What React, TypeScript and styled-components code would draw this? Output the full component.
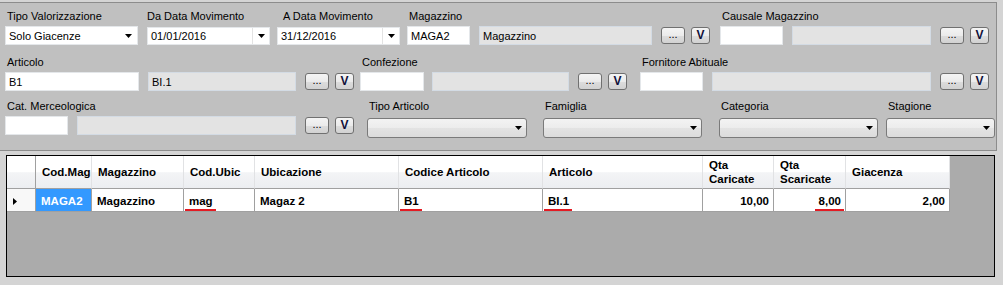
import React from "react";
import styled, { createGlobalStyle } from "styled-components";

const GlobalStyle = createGlobalStyle`
  html, body { margin: 0; padding: 0; background: #d4d4d4; }
  body { font-family: "Liberation Sans", Arial, sans-serif; color: #000; }
  * { box-sizing: border-box; }
`;

const Page = styled.div`
  width: 1003px;
  height: 285px;
  padding-top: 2px;
  background: #d4d4d4;
  overflow: hidden;
`;

const FilterPanel = styled.div`
  width: 997px;
  height: 149px;
  background: #c0c0c0;
  border-top: 1px solid #8c8c8c;
  border-right: 1px solid #8c8c8c;
  border-bottom: 1px solid #8c8c8c;
  padding-top: 6px;
  display: flex;
  flex-direction: column;
`;

const FormRow = styled.div<{ $mt?: number }>`
  display: flex;
  align-items: flex-start;
  margin-top: ${(p) => p.$mt ?? 0}px;
`;

const Field = styled.div<{ $ml: number; $gap?: number }>`
  display: flex;
  flex-direction: column;
  margin-left: ${(p) => p.$ml}px;
  gap: ${(p) => p.$gap ?? 3}px;
`;

const Label = styled.div<{ $pl?: number }>`
  font-size: 11px;
  line-height: 14px;
  height: 14px;
  white-space: nowrap;
  padding-left: ${(p) => p.$pl ?? 2}px;
`;

const Controls = styled.div`
  display: flex;
  align-items: center;
  height: 19px;
`;

const TextBox = styled.div<{ $w: number; $ro?: boolean; $ml?: number }>`
  width: ${(p) => p.$w}px;
  height: 19px;
  margin-left: ${(p) => p.$ml ?? 0}px;
  background: ${(p) => (p.$ro ? "#e3e3e3" : "#ffffff")};
  border: 1px solid ${(p) => (p.$ro ? "#d3dbe4" : "#e4e7ea")};
  font-size: 11px;
  padding-left: 3px;
  display: flex;
  align-items: center;
  white-space: nowrap;
  overflow: hidden;
`;

const SmallButton = styled.div<{ $w: number; $ml: number; $bold?: boolean }>`
  width: ${(p) => p.$w}px;
  height: 17px;
  margin-left: ${(p) => p.$ml}px;
  border: 1px solid #707070;
  border-radius: 3px;
  background: linear-gradient(#f4f4f4 0%, #ebebeb 50%, #dddddd 51%, #d2d2d2 100%);
  display: flex;
  justify-content: center;
  align-items: ${(p) => (p.$bold ? "center" : "flex-end")};
  padding-bottom: ${(p) => (p.$bold ? 0 : 3)}px;
  font-size: ${(p) => (p.$bold ? 12 : 11)}px;
  font-weight: ${(p) => (p.$bold ? "bold" : "normal")};
  line-height: 11px;
  color: ${(p) => (p.$bold ? "#10103a" : "#000")};
`;

const DropBox = styled.div<{ $w: number }>`
  width: ${(p) => p.$w}px;
  height: 19px;
  background: #ffffff;
  border: 1px solid #e4e7ea;
  display: flex;
  align-items: center;
  font-size: 11px;
  padding-left: 3px;
  padding-right: 5px;
`;

const DropText = styled.span`
  flex: 1;
  white-space: nowrap;
`;

const DateBox = styled.div<{ $w: number }>`
  width: ${(p) => p.$w}px;
  height: 18px;
  margin-top: 1px;
  background: #ffffff;
  border: 1px solid #e4e7ea;
  display: flex;
  align-items: stretch;
  font-size: 11px;
`;

const DateText = styled.span`
  flex: 1;
  padding-left: 3px;
  display: flex;
  align-items: center;
`;

const DateButton = styled.span`
  width: 17px;
  border-left: 1px solid #e3e3e3;
  display: flex;
  align-items: center;
  justify-content: center;
`;

const FlatCombo = styled.div<{ $w: number }>`
  width: ${(p) => p.$w}px;
  height: 20px;
  border: 1px solid #7a7a7a;
  border-radius: 3px;
  background: linear-gradient(#f3f3f3 0%, #ececec 50%, #e3e3e3 51%, #dcdcdc 100%);
  display: flex;
  align-items: center;
  justify-content: flex-end;
  padding-right: 4px;
`;

const Arrow = () => (
  <svg width="7" height="4" viewBox="0 0 7 4">
    <polygon points="0,0 7,0 3.5,4" fill="#000" />
  </svg>
);

const GridBox = styled.div`
  margin: 4px 0 0 6px;
  width: 989px;
  height: 122px;
  border: 1px solid #000;
  background: #ababab;
`;

const GridTable = styled.div`
  display: grid;
  grid-template-columns: 29px 56px 92px 71px 144px 144px 160px 71px 72px 104px;
  width: 943px;
`;

const HeaderCell = styled.div<{ $dark?: boolean }>`
  height: 33px;
  border-right: 1px solid ${(p) => (p.$dark ? "#a0a0a0" : "#e1e2e4")};
  border-bottom: 1px solid #a0a0a0;
  background: linear-gradient(#ffffff 0%, #ffffff 50%, #f3f4f6 52%, #eceef1 100%);
  display: flex;
  align-items: center;
  padding-left: 6px;
  font-weight: bold;
  font-size: 11.5px;
  line-height: 14px;
  white-space: nowrap;
  overflow: hidden;
`;

const RowHeaderCell = styled.div`
  height: 23px;
  border-right: 1px solid #a0a0a0;
  border-bottom: 1px solid #a0a0a0;
  background: #f8f8f8;
  display: flex;
  align-items: center;
  padding-left: 6px;
  padding-top: 2px;
`;

const DataCell = styled.div<{ $right?: boolean; $selected?: boolean }>`
  height: 23px;
  border-right: 1px solid #a0a0a0;
  border-bottom: 1px solid #a0a0a0;
  background: ${(p) => (p.$selected ? "#3399ff" : "#ffffff")};
  color: ${(p) => (p.$selected ? "#ffffff" : "#000")};
  display: flex;
  align-items: center;
  justify-content: ${(p) => (p.$right ? "flex-end" : "flex-start")};
  padding: 2px ${(p) => (p.$right ? 4 : 0)}px 0 ${(p) => (p.$right ? 0 : 5)}px;
  font-weight: bold;
  font-size: 11.5px;
  line-height: 14px;
  white-space: nowrap;
  overflow: hidden;
`;

const Marked = styled.span`
  position: relative;
  &::after {
    content: "";
    position: absolute;
    left: -4px;
    right: -3px;
    top: calc(100% + 1px);
    height: 2px;
    background: #e31b23;
  }
`;

type LookupProps = {
  ml: number;
  label: string;
  codeW: number;
  code?: string;
  descW: number;
  desc?: string;
  descGap?: number;
};

const Lookup = ({ ml, label, codeW, code, descW, desc, descGap = 9 }: LookupProps) => (
  <Field $ml={ml}>
    <Label>{label}</Label>
    <Controls>
      <TextBox $w={codeW}>{code}</TextBox>
      <TextBox $w={descW} $ro $ml={descGap}>{desc}</TextBox>
      <SmallButton $w={24} $ml={9}>...</SmallButton>
      <SmallButton $w={19} $ml={6} $bold>V</SmallButton>
    </Controls>
  </Field>
);

const TriangleRight = () => (
  <svg width="4" height="7" viewBox="0 0 4 7">
    <polygon points="0,0 4,3.5 0,7" fill="#000" />
  </svg>
);

export default function App() {
  return (
    <>
      <GlobalStyle />
      <Page>
        <FilterPanel>
          <FormRow>
            <Field $ml={5}>
              <Label>Tipo Valorizzazione</Label>
              <Controls>
                <DropBox $w={133}>
                  <DropText>Solo Giacenze</DropText>
                  <Arrow />
                </DropBox>
              </Controls>
            </Field>
            <Field $ml={9}>
              <Label $pl={0}>Da Data Movimento</Label>
              <Controls>
                <DateBox $w={123}>
                  <DateText>01/01/2016</DateText>
                  <DateButton><Arrow /></DateButton>
                </DateBox>
              </Controls>
            </Field>
            <Field $ml={7}>
              <Label $pl={6}>A Data Movimento</Label>
              <Controls>
                <DateBox $w={123}>
                  <DateText>31/12/2016</DateText>
                  <DateButton><Arrow /></DateButton>
                </DateBox>
              </Controls>
            </Field>
            <Lookup ml={7} label="Magazzino" codeW={63} code="MAGA2" descW={173} desc="Magazzino" />
            <Lookup ml={10} label="Causale Magazzino" codeW={63} descW={139} />
          </FormRow>

          <FormRow $mt={10}>
            <Lookup ml={5} label="Articolo" codeW={134} code="B1" descW={148} desc="BI.1" />
            <Lookup ml={6} label="Confezione" codeW={64} descW={137} descGap={8} />
            <Lookup ml={13} label="Fornitore Abituale" codeW={63} descW={219} />
          </FormRow>

          <FormRow $mt={8}>
            <Lookup ml={5} label="Cat. Merceologica" codeW={63} descW={219} />
            <Field $ml={13} $gap={5}>
              <Label>Tipo Articolo</Label>
              <FlatCombo $w={160}><Arrow /></FlatCombo>
            </Field>
            <Field $ml={16} $gap={5}>
              <Label>Famiglia</Label>
              <FlatCombo $w={159}><Arrow /></FlatCombo>
            </Field>
            <Field $ml={17} $gap={5}>
              <Label>Categoria</Label>
              <FlatCombo $w={159}><Arrow /></FlatCombo>
            </Field>
            <Field $ml={8} $gap={5}>
              <Label>Stagione</Label>
              <FlatCombo $w={109}><Arrow /></FlatCombo>
            </Field>
          </FormRow>
        </FilterPanel>

        <GridBox>
          <GridTable>
            <HeaderCell $dark />
            <HeaderCell>Cod.Mag</HeaderCell>
            <HeaderCell>Magazzino</HeaderCell>
            <HeaderCell>Cod.Ubic</HeaderCell>
            <HeaderCell>Ubicazione</HeaderCell>
            <HeaderCell>Codice Articolo</HeaderCell>
            <HeaderCell>Articolo</HeaderCell>
            <HeaderCell>Qta<br />Caricate</HeaderCell>
            <HeaderCell>Qta<br />Scaricate</HeaderCell>
            <HeaderCell>Giacenza</HeaderCell>

            <RowHeaderCell><TriangleRight /></RowHeaderCell>
            <DataCell $selected>MAGA2</DataCell>
            <DataCell>Magazzino</DataCell>
            <DataCell><Marked>mag</Marked></DataCell>
            <DataCell>Magaz 2</DataCell>
            <DataCell><Marked>B1</Marked></DataCell>
            <DataCell><Marked>BI.1</Marked></DataCell>
            <DataCell $right>10,00</DataCell>
            <DataCell $right><Marked>8,00</Marked></DataCell>
            <DataCell $right>2,00</DataCell>
          </GridTable>
        </GridBox>
      </Page>
    </>
  );
}
